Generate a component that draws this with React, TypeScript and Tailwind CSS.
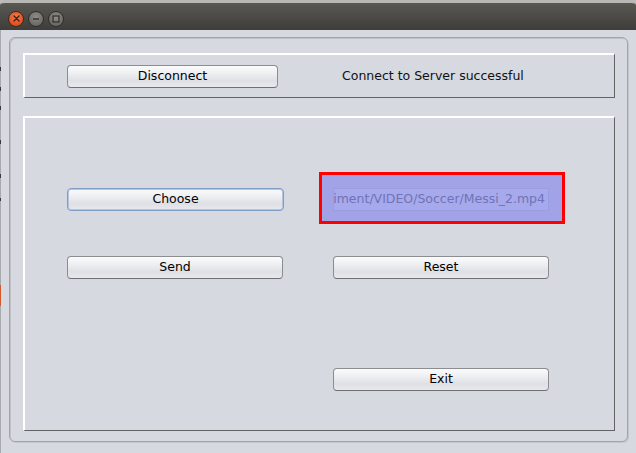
import React from "react";

const font = { fontFamily: '"DejaVu Sans", Verdana, sans-serif' };

function SwingButton({ label, focused = false, className = "" }: { label: string; focused?: boolean; className?: string }) {
  return (
    <button
      className={
        "flex h-[23px] items-center justify-center rounded-[4px] border text-[12.5px] leading-none text-black " +
        "bg-[linear-gradient(to_bottom,#fbfbfc_0%,#eeeff2_35%,#dfe0e5_70%,#e8e9ed_100%)] " +
        (focused
          ? "border-[#7f9ec6] shadow-[inset_0_0_0_1px_#b4c6de] "
          : "border-[#8c8d91] border-b-[#6f7074] ") +
        className
      }
    >
      {label}
    </button>
  );
}

function TitleButton({ kind }: { kind: "close" | "min" | "max" }) {
  if (kind === "close") {
    return (
      <div className="flex h-[16px] w-[16px] items-center justify-center rounded-full border border-[#3a2a22] bg-[radial-gradient(circle_at_50%_35%,#f47a4c,#e0501f_70%)]">
        <svg width="7" height="7" viewBox="0 0 7 7">
          <path d="M1 1L6 6M6 1L1 6" stroke="#3b2218" strokeWidth="1.4" strokeLinecap="round" />
        </svg>
      </div>
    );
  }
  return (
    <div className="flex h-[16px] w-[16px] items-center justify-center rounded-full border border-[#2f2e2b] bg-[radial-gradient(circle_at_50%_35%,#8f8d87,#6c6a64_70%)]">
      {kind === "min" ? (
        <svg width="8" height="8" viewBox="0 0 8 8">
          <path d="M1 4H7" stroke="#2e2d2a" strokeWidth="1.4" />
        </svg>
      ) : (
        <svg width="8" height="8" viewBox="0 0 8 8">
          <rect x="1" y="1" width="6" height="6" fill="none" stroke="#2e2d2a" strokeWidth="1.2" />
        </svg>
      )}
    </div>
  );
}

export default function App() {
  return (
    <div style={font} className="flex h-[453px] w-[636px] flex-col overflow-hidden bg-[#bdbdbd]">
      {/* title bar */}
      <div className="flex h-[30px] shrink-0 items-center gap-[4px] rounded-t-[5px] border-t-[3px] border-[#b9b8b4] bg-[linear-gradient(to_bottom,#5a5853,#3e3d39)] pl-[8px] pt-[4px]">
        <TitleButton kind="close" />
        <TitleButton kind="min" />
        <TitleButton kind="max" />
      </div>

      {/* window body */}
      <div className="flex flex-1 bg-[#d6d9df]">
        <div className="flex w-[1px] shrink-0 flex-col bg-[#a9aaad]">
          <div className="mt-[37px] h-[4px] bg-[#3a3a3a]" />
          <div className="mt-[16px] h-[4px] bg-[#3a3a3a]" />
          <div className="mt-[15px] h-[4px] bg-[#3a3a3a]" />
          <div className="mt-[30px] h-[4px] bg-[#3a3a3a]" />
          <div className="mt-[30px] h-[4px] bg-[#3a3a3a]" />
          <div className="mt-[20px] h-[3px] bg-[#3a3a3a]" />
          <div className="mt-[84px] h-[21px] bg-[#d45a2a]" />
        </div>

        <div className="ml-[8px] mt-[7px] flex h-[405px] w-[619px] flex-col rounded-[6px] border border-[#a3a5a9] bg-[#d6d9df] px-[13px] pt-[15px] shadow-[inset_1px_1px_0_#bfc1c5,1px_1px_0_#c4c6ca]">
          {/* connection box */}
          <div className="flex h-[45px] w-[592px] items-center border-b border-l-2 border-r border-t-2 border-b-[#626365] border-l-white border-r-[#626365] border-t-white pl-[42px]">
            <SwingButton label="Disconnect" className="w-[211px]" />
            <span className="ml-[64px] text-[12.5px] text-[#111]">Connect to Server successful</span>
          </div>

          {/* file box */}
          <div className="mt-[18px] flex h-[315px] w-[592px] border-b border-l-2 border-r border-t-2 border-b-[#626365] border-l-white border-r-[#626365] border-t-white pl-[42px] pt-[70px]">
            <div className="flex w-[217px] flex-col">
              <SwingButton label="Choose" focused className="w-[217px]" />
              <SwingButton label="Send" className="mt-[45px] w-[216px]" />
            </div>
            <div className="ml-[49px] flex w-[216px] flex-col">
              <div className="relative h-[23px] w-[216px]">
                <div className="absolute -left-[14px] -top-[16px] h-[52px] w-[246px] border-[3px] border-[#ff0000] bg-[#a1a3e6]" />
                <div className="absolute inset-0 flex items-center justify-end overflow-hidden whitespace-nowrap border border-[#9a9de0] bg-[#a6a9ec] pr-[3px] text-[12.5px] text-[#7272b6]">
                  iment/VIDEO/Soccer/Messi_2.mp4
                </div>
              </div>
              <SwingButton label="Reset" className="mt-[45px] w-[216px]" />
              <SwingButton label="Exit" className="mt-[89px] w-[216px]" />
            </div>
          </div>
        </div>
      </div>
    </div>
  );
}
